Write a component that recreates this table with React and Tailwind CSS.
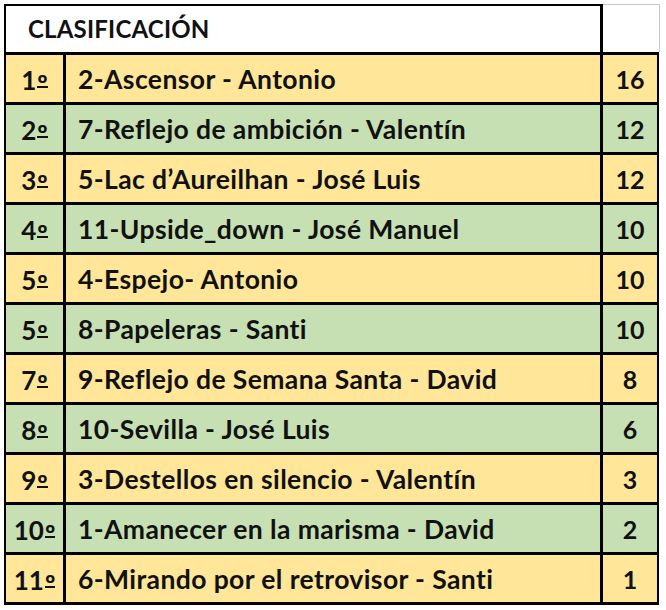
import React from "react";

const rows = [
  ["1", "2-Ascensor - Antonio", "16"],
  ["2", "7-Reflejo de ambición - Valentín", "12"],
  ["3", "5-Lac d’Aureilhan - José Luis", "12"],
  ["4", "11-Upside_down - José Manuel", "10"],
  ["5", "4-Espejo- Antonio", "10"],
  ["5", "8-Papeleras - Santi", "10"],
  ["7", "9-Reflejo de Semana Santa - David", "8"],
  ["8", "10-Sevilla - José Luis", "6"],
  ["9", "3-Destellos en silencio - Valentín", "3"],
  ["10", "1-Amanecer en la marisma - David", "2"],
  ["11", "6-Mirando por el retrovisor - Santi", "1"],
];

export default function App() {
  return (
    <div
      className="w-[666px] h-[610px] bg-white text-[#111] font-bold leading-none"
      style={{ fontFamily: "Lato, 'Open Sans', sans-serif" }}
    >
      <div className="pl-[4px] pt-[4px] w-[662px]">
        <div className="flex h-[51px]">
          <div className="w-[599px] border-t-2 border-l-2 border-b-[3px] border-r-[3px] border-black bg-white flex items-center pl-[22px] text-[24px] tracking-[0.2px]">
            CLASIFICACIÓN
          </div>
          <div className="w-[56px] border-t border-t-[#c8c8c8] border-b-[3px] border-b-black bg-white" />
          <div className="w-px bg-[#c8c8c8] h-[48px]" />
        </div>
        {rows.map(([rank, name, pts], i) => {
          const bg = i % 2 === 0 ? "bg-[#FFE699]" : "bg-[#C6E0B4]";
          return (
            <div key={i} className={`flex h-[50px] w-[655px] ${bg} border-b-[3px] border-black`}>
              <div className="w-[62px] border-l-2 border-r-[3px] border-black flex items-center justify-center pt-[2px] text-[26px]">
                <span>
                  {rank}
                  <span className="relative top-[4px] ml-[1px]">
                    º
                    <span className="absolute left-0 right-0 top-[18px] h-[2px] bg-[#111]" />
                  </span>
                </span>
              </div>
              <div className="w-[537px] border-r-[3px] border-black flex items-center pl-[12px] pt-[2px] text-[26.5px] tracking-[0.4px]">
                {name}
              </div>
              <div className="w-[56px] border-r-2 border-black flex items-center justify-center pt-[2px] text-[25px]">
                {pts}
              </div>
            </div>
          );
        })}
      </div>
    </div>
  );
}
